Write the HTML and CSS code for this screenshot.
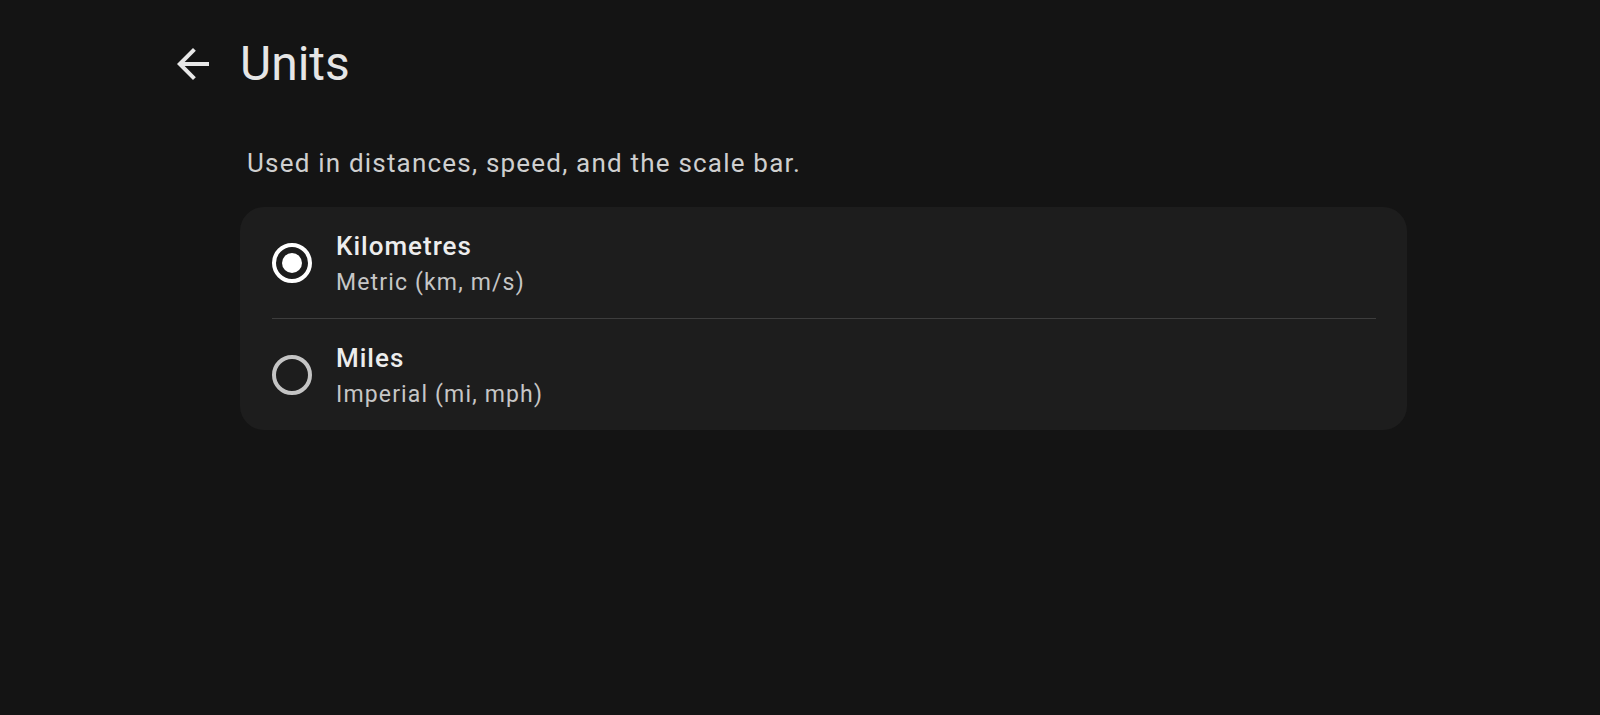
FILE: index.html
```html
<!DOCTYPE html>
<html lang="en">
<head>
<meta charset="utf-8">
<title>Units</title>
<link rel="stylesheet" href="styles.css">
</head>
<body>
<div class="page">
  <header class="topbar">
    <button class="back" aria-label="Back">
      <svg viewBox="0 0 24 24" width="48" height="48"><path d="M20 11H7.83l5.59-5.59L12 4l-8 8 8 8 1.41-1.41L7.83 13H20v-2z" fill="currentColor"/></svg>
    </button>
    <h1 class="title">Units</h1>
  </header>
  <main class="content">
    <p class="desc">Used in distances, speed, and the scale bar.</p>
    <div class="card">
      <div class="row">
        <span class="radio radio-on"><span class="dot"></span></span>
        <div class="text">
          <div class="label">Kilometres</div>
          <div class="sub">Metric (km, m/s)</div>
        </div>
      </div>
      <div class="divider"></div>
      <div class="row">
        <span class="radio"></span>
        <div class="text">
          <div class="label">Miles</div>
          <div class="sub">Imperial (mi, mph)</div>
        </div>
      </div>
    </div>
  </main>
</div>
</body>
</html>
```
FILE: styles.css
```css
html, body {
  margin: 0;
  padding: 0;
  background: #141414;
  font-family: Roboto, "Liberation Sans", sans-serif;
  color: #e6e6e6;
}
.page {
  padding: 36px 193px 0 169px;
}
.topbar {
  display: flex;
  align-items: center;
  height: 56px;
  gap: 23px;
}
.back {
  width: 48px;
  height: 48px;
  padding: 0;
  border: 0;
  background: none;
  color: #e8e8e8;
  display: flex;
}
.title {
  margin: 0;
  font-size: 48px;
  font-weight: 400;
  line-height: 56px;
  color: #e6e6e6;
}
.content {
  margin-left: 71px;
}
.desc {
  margin: 56px 0 0 7px;
  font-size: 26px;
  line-height: 30px;
  color: #cfcfcf;
  letter-spacing: 1.2px;
}
.card {
  margin-top: 29px;
  background: #1d1d1d;
  border-radius: 24px;
}
.row {
  display: flex;
  align-items: center;
  height: 111px;
  padding: 0 32px;
  gap: 24px;
}
.radio {
  width: 40px;
  height: 40px;
  box-sizing: border-box;
  border: 4px solid #c4c4c4;
  border-radius: 50%;
  display: flex;
  align-items: center;
  justify-content: center;
  flex: none;
}
.radio-on {
  border-color: #ffffff;
}
.dot {
  width: 20px;
  height: 20px;
  border-radius: 50%;
  background: #ffffff;
}
.text {
  display: flex;
  flex-direction: column;
  gap: 6px;
  padding-top: 2px;
}
.label {
  font-size: 26px;
  font-weight: 500;
  line-height: 32px;
  color: #ededed;
  letter-spacing: 1px;
}
.sub {
  font-size: 23px;
  line-height: 30px;
  color: #c6c6c6;
  letter-spacing: 1.15px;
}
.divider {
  height: 1px;
  margin: 0 31px 0 32px;
  background: #3d3d3d;
}
```
